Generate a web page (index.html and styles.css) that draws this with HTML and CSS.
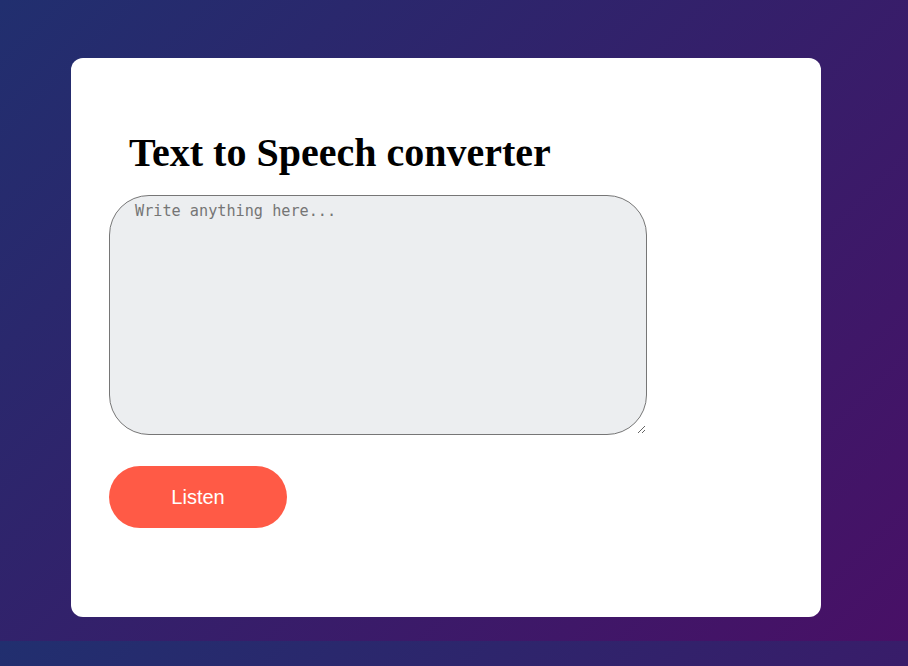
FILE: index.html
```html
<!DOCTYPE html>
<html>
<head>
<meta charset="utf-8">
<title>Text to Speech converter</title>
<link rel="stylesheet" href="styles.css">
</head>
<body>
<div class="page">
  <div class="card">
    <h1 class="title">Text to Speech converter</h1>
    <textarea class="input" placeholder="Write anything here..."></textarea>
    <button class="listen">Listen</button>
  </div>
</div>
</body>
</html>
```
FILE: styles.css
```css
html {
  margin: 0;
}
body {
  margin: 0;
  background: linear-gradient(135deg, #212f6f 0%, #481066 100%);
}
.page {
  height: 641px;
  padding: 58px 0 0 71px;
  box-sizing: border-box;
}
.card {
  width: 750px;
  height: 559px;
  box-sizing: border-box;
  background: #ffffff;
  border-radius: 12px;
  padding: 72px 38px 0 38px;
  display: flex;
  flex-direction: column;
  align-items: flex-start;
}
.title {
  font-family: "Liberation Serif", "Times New Roman", serif;
  font-weight: bold;
  font-size: 40px;
  line-height: 46px;
  margin: 0 0 19px 0;
  padding-left: 20px;
  color: #000;
}
.input {
  width: 538px;
  height: 240px;
  box-sizing: border-box;
  border: 1px solid #767676;
  border-radius: 40px;
  background: #eceef0;
  padding: 6px 24px 6px 25px;
  font-family: "DejaVu Sans Mono", "Liberation Mono", monospace;
  font-size: 15.2px;
  line-height: 18px;
  margin: 0 0 31px 0;
  outline: none;
}
.input::placeholder {
  color: #757575;
}
.listen {
  width: 178px;
  height: 62px;
  border: none;
  border-radius: 31px;
  background: #ff5a46;
  color: #ffffff;
  font-family: "Liberation Sans", Arial, sans-serif;
  font-size: 20px;
  cursor: pointer;
}
```
